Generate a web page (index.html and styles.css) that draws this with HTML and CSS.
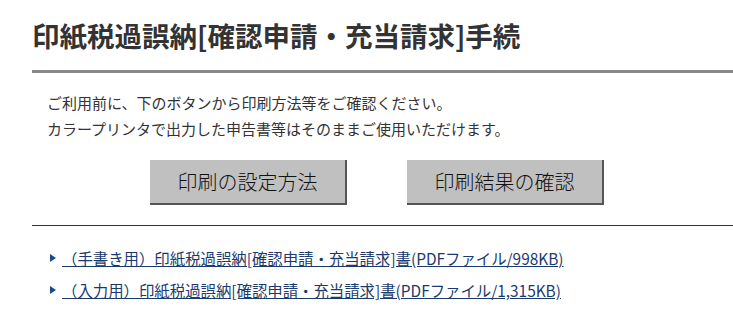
FILE: index.html
```html
<!DOCTYPE html>
<html lang="ja">
<head>
<meta charset="UTF-8">
<meta name="viewport" content="width=device-width, initial-scale=1.0">
<title>印紙税過誤納[確認申請・充当請求]手続</title>
<link rel="stylesheet" href="styles.css">
</head>
<body>

<div class="page">
  <h1 class="title">印紙税過誤納[確認申請・充当請求]手続</h1>

  <div class="intro">
    <p>ご利用前に、下のボタンから印刷方法等をご確認ください。</p>
    <p>カラープリンタで出力した申告書等はそのままご使用いただけます。</p>
  </div>

  <div class="buttons">
    <button class="gray-btn">印刷の設定方法</button>
    <button class="gray-btn">印刷結果の確認</button>
  </div>

  <hr class="rule">

  <ul class="links">
    <li><a href="#">（手書き用）印紙税過誤納[確認申請・充当請求]書(PDFファイル/998KB)</a></li>
    <li><a href="#">（入力用）印紙税過誤納[確認申請・充当請求]書(PDFファイル/1,315KB)</a></li>
  </ul>
</div>

</body>
</html>
```

FILE: styles.css
```css
body {
  margin: 0;
  background: #fff;
  color: #333;
  font-family: "Noto Sans CJK JP", "Noto Sans", sans-serif;
}

.page {
  padding-left: 32px;
}

.title {
  margin: 0;
  padding-top: 14px;
  padding-bottom: 14px;
  font-size: 27.5px;
  line-height: 42px;
  font-weight: bold;
  color: #333;
  border-bottom: 3px solid #888;
}

.intro {
  padding: 17px 0 0 15px;
  font-size: 15px;
  line-height: 26px;
}

.intro p {
  margin: 0;
}

.buttons {
  display: flex;
  gap: 60px;
  padding-left: 118px;
  margin-top: 18px;
}

.gray-btn {
  width: 197px;
  height: 45px;
  padding: 0;
  background: #c0c0c0;
  border: none;
  border-right: 2px solid #555;
  border-bottom: 2px solid #555;
  font-family: "Noto Sans CJK JP", sans-serif;
  font-size: 20px;
  font-weight: 300;
  color: #111;
  cursor: pointer;
}

.rule {
  margin: 20px 0 0 0;
  border: none;
  border-top: 1px solid #333;
}

.links {
  list-style: none;
  margin: 0;
  padding: 16px 0 0 18px;
  font-size: 15.4px;
  line-height: 32px;
}

.links li {
  display: flex;
  align-items: center;
  height: 32px;
}

.links li::before {
  content: "";
  width: 0;
  height: 0;
  border-top: 4px solid transparent;
  border-bottom: 4px solid transparent;
  border-left: 6px solid #1a4a8a;
  margin-right: 6px;
}

.links a {
  color: #1a3a6e;
  text-decoration: underline;
}
```
